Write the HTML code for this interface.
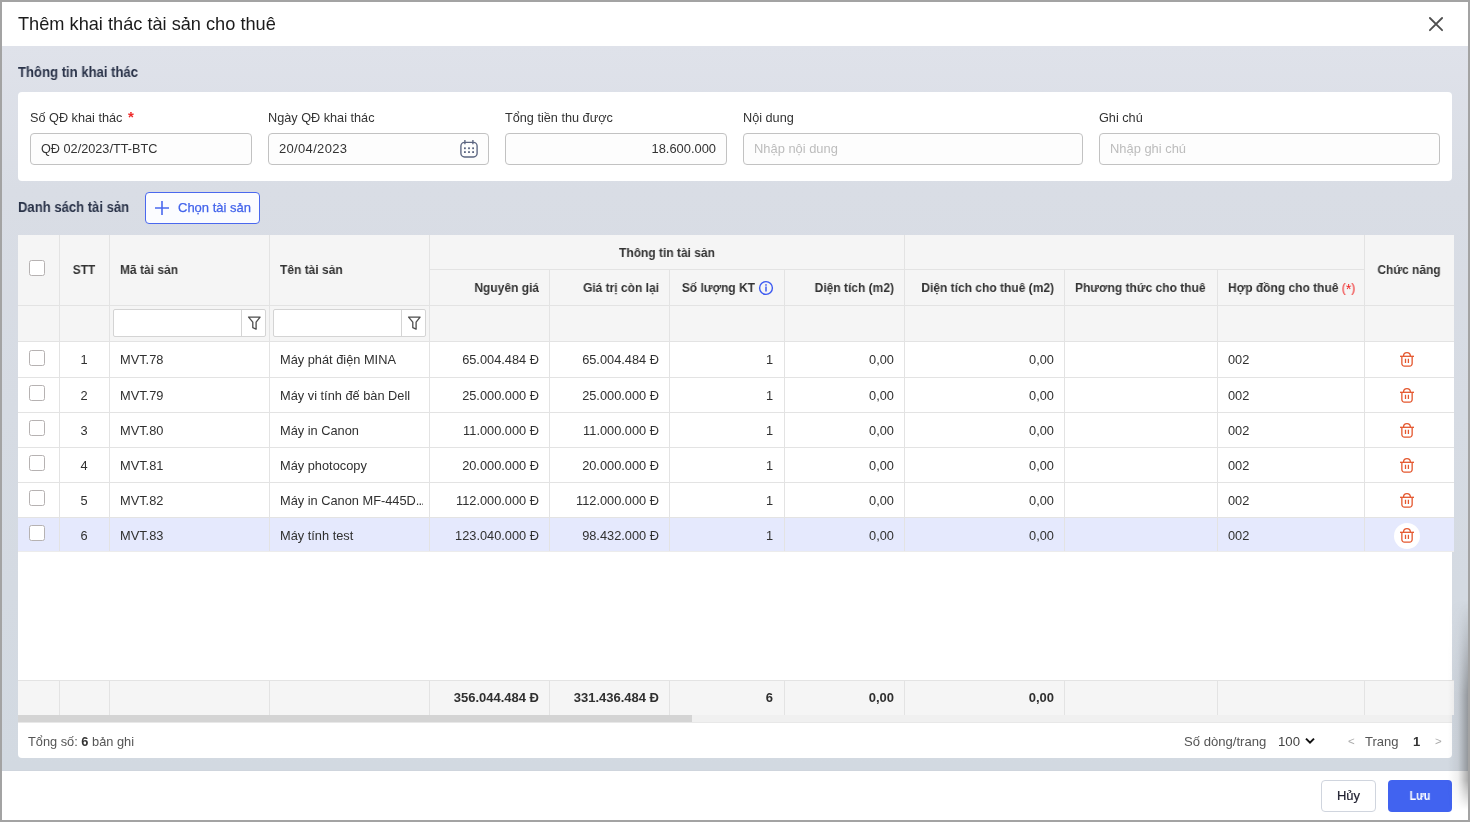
<!DOCTYPE html><html><head><meta charset="utf-8"><style>
html,body{margin:0;padding:0;}
body{width:1470px;height:822px;position:relative;overflow:hidden;background:#fff;font-family:"Liberation Sans", sans-serif;}
.t{position:absolute;white-space:nowrap;will-change:transform;}
.b{position:absolute;box-sizing:border-box;}
svg{position:absolute;}
</style></head><body>
<div class="b" style="left:2px;top:46px;width:1466px;height:725px;border-bottom:1px solid #cfd5dd;background:linear-gradient(180deg,#dfe2ea 0%,#d9dde5 20%,#d6dbe3 50%,#d2d9e1 100%);"></div>
<div class="t" style="left:18px;top:14.59px;font-size:18.2px;color:#1b1b1b;font-weight:400;line-height:18.2px;">Thêm khai thác tài sản cho thuê</div>
<svg style="left:1427px;top:15px" width="18" height="18" viewBox="0 0 18 18"><path d="M2.9 3.0L15.1 15.2M15.1 3.0L2.9 15.2" stroke="#4e4e4e" stroke-width="1.8" stroke-linecap="round"/></svg>
<div class="t" style="left:18px;top:65.15px;font-size:14px;color:#2a3349;font-weight:700;line-height:14px;transform:scaleX(0.935);transform-origin:0 0;">Thông tin khai thác</div>
<div class="b" style="left:18px;top:92px;width:1434px;height:89px;background:#fff;border-radius:4px;"></div>
<div class="t" style="left:30px;top:112.25px;font-size:12.7px;color:#333;font-weight:400;line-height:12.7px;">Số QĐ khai thác</div>
<div class="b" style="left:30px;top:133px;width:222px;height:32px;border:1px solid #c2c2c2;border-radius:4px;background:#fdfdfd;"></div>
<div class="t" style="left:268px;top:112.25px;font-size:12.7px;color:#333;font-weight:400;line-height:12.7px;">Ngày QĐ khai thác</div>
<div class="b" style="left:268px;top:133px;width:221px;height:32px;border:1px solid #c2c2c2;border-radius:4px;background:#fdfdfd;"></div>
<div class="t" style="left:505px;top:112.25px;font-size:12.7px;color:#333;font-weight:400;line-height:12.7px;">Tổng tiền thu được</div>
<div class="b" style="left:505px;top:133px;width:222px;height:32px;border:1px solid #c2c2c2;border-radius:4px;background:#fdfdfd;"></div>
<div class="t" style="left:743px;top:112.25px;font-size:12.7px;color:#333;font-weight:400;line-height:12.7px;">Nội dung</div>
<div class="b" style="left:743px;top:133px;width:340px;height:32px;border:1px solid #c2c2c2;border-radius:4px;background:#fdfdfd;"></div>
<div class="t" style="left:1099px;top:112.25px;font-size:12.7px;color:#333;font-weight:400;line-height:12.7px;">Ghi chú</div>
<div class="b" style="left:1099px;top:133px;width:341px;height:32px;border:1px solid #c2c2c2;border-radius:4px;background:#fdfdfd;"></div>
<div class="t" style="left:127.5px;top:109.30px;font-size:15px;color:#ee2a2a;font-weight:700;line-height:15px;">*</div>
<div class="t" style="left:41px;top:143.25px;font-size:12.7px;color:#333;font-weight:400;line-height:12.7px;">QĐ 02/2023/TT-BTC</div>
<div class="t" style="left:279px;top:142.00px;font-size:13px;color:#333;font-weight:400;line-height:13px;letter-spacing:0.33px;">20/04/2023</div>
<div class="t" style="left:416px;width:300px;text-align:right;top:143.08px;font-size:12.9px;color:#333;font-weight:400;line-height:12.9px;">18.600.000</div>
<div class="t" style="left:754px;top:143.08px;font-size:12.9px;color:#bcbcbc;font-weight:400;line-height:12.9px;">Nhập nội dung</div>
<div class="t" style="left:1110px;top:143.08px;font-size:12.9px;color:#bcbcbc;font-weight:400;line-height:12.9px;">Nhập ghi chú</div>
<svg style="left:459px;top:139px" width="20" height="20" viewBox="0 0 20 20">
<rect x="1.9" y="3.35" width="16.2" height="14.6" rx="3.6" fill="none" stroke="#5b6580" stroke-width="1.35"/>
<path d="M5.9 1.1V5.3M13.9 1.1V5.3" stroke="#5b6580" stroke-width="1.35"/>
<g fill="#5b6580"><rect x="5.0" y="8.36" width="1.8" height="1.8"/><rect x="9.1" y="8.36" width="1.8" height="1.8"/><rect x="13.2" y="8.36" width="1.8" height="1.8"/>
<rect x="5.0" y="12.2" width="1.8" height="1.8"/><rect x="9.1" y="12.2" width="1.8" height="1.8"/><rect x="13.2" y="12.2" width="1.8" height="1.8"/></g></svg>
<div class="t" style="left:18px;top:200.15px;font-size:14px;color:#2a3349;font-weight:700;line-height:14px;transform:scaleX(0.933);transform-origin:0 0;">Danh sách tài sản</div>
<div class="b" style="left:145px;top:192px;width:115px;height:32px;border:1px solid #4a68ee;border-radius:4px;background:#fbfcff;"></div>
<svg style="left:154px;top:200px" width="16" height="16" viewBox="0 0 16 16"><path d="M8 1V15M1 8H15" stroke="#4a68ee" stroke-width="1.6"/></svg>
<div class="t" style="left:178px;top:201.00px;font-size:13px;color:#4263eb;font-weight:400;line-height:13px;-webkit-text-stroke:0.25px #4263eb;">Chọn tài sản</div>
<div class="b" style="left:18px;top:235px;width:1436px;height:106px;background:#f5f5f5;"></div>
<div class="b" style="left:18px;top:342px;width:1436px;height:210px;background:#fff;"></div>
<div class="b" style="left:18px;top:552px;width:1434px;height:128px;background:#fff;"></div>
<div class="b" style="left:18px;top:518px;width:1436px;height:33px;background:#e5e9fd;"></div>
<div class="b" style="left:18px;top:680px;width:1436px;height:35px;background:#f5f5f5;border-top:1px solid #e3e3e3;"></div>
<div class="b" style="left:18px;top:715px;width:1434px;height:7px;background:#f0f0f0;"></div>
<div class="b" style="left:18px;top:715px;width:674px;height:7px;background:#d4d4d4;"></div>
<div class="b" style="left:18px;top:722px;width:1434px;height:36px;background:#fff;border-top:1px solid #e8e8e8;border-radius:0 0 4px 4px;"></div>
<div class="b" style="left:59px;top:235px;width:1px;height:106px;background:#e3e3e3;"></div>
<div class="b" style="left:109px;top:235px;width:1px;height:106px;background:#e3e3e3;"></div>
<div class="b" style="left:269px;top:235px;width:1px;height:106px;background:#e3e3e3;"></div>
<div class="b" style="left:429px;top:235px;width:1px;height:106px;background:#e3e3e3;"></div>
<div class="b" style="left:904px;top:235px;width:1px;height:106px;background:#e3e3e3;"></div>
<div class="b" style="left:1364px;top:235px;width:1px;height:106px;background:#e3e3e3;"></div>
<div class="b" style="left:549px;top:270px;width:1px;height:71px;background:#e3e3e3;"></div>
<div class="b" style="left:669px;top:270px;width:1px;height:71px;background:#e3e3e3;"></div>
<div class="b" style="left:784px;top:270px;width:1px;height:71px;background:#e3e3e3;"></div>
<div class="b" style="left:1064px;top:270px;width:1px;height:71px;background:#e3e3e3;"></div>
<div class="b" style="left:1217px;top:270px;width:1px;height:71px;background:#e3e3e3;"></div>
<div class="b" style="left:429px;top:269px;width:935px;height:1px;background:#e3e3e3;"></div>
<div class="b" style="left:18px;top:305px;width:1436px;height:1px;background:#e3e3e3;"></div>
<div class="b" style="left:18px;top:341px;width:1436px;height:1px;background:#e3e3e3;"></div>
<div class="b" style="left:18px;top:377px;width:1436px;height:1px;background:#e3e3e3;"></div>
<div class="b" style="left:18px;top:412px;width:1436px;height:1px;background:#e3e3e3;"></div>
<div class="b" style="left:18px;top:447px;width:1436px;height:1px;background:#e3e3e3;"></div>
<div class="b" style="left:18px;top:482px;width:1436px;height:1px;background:#e3e3e3;"></div>
<div class="b" style="left:18px;top:517px;width:1436px;height:1px;background:#e3e3e3;"></div>
<div class="b" style="left:18px;top:551px;width:1436px;height:1px;background:#ececec;"></div>
<div class="b" style="left:59px;top:342px;width:1px;height:209px;background:#e3e3e3;"></div>
<div class="b" style="left:109px;top:342px;width:1px;height:209px;background:#e3e3e3;"></div>
<div class="b" style="left:269px;top:342px;width:1px;height:209px;background:#e3e3e3;"></div>
<div class="b" style="left:429px;top:342px;width:1px;height:209px;background:#e3e3e3;"></div>
<div class="b" style="left:549px;top:342px;width:1px;height:209px;background:#e3e3e3;"></div>
<div class="b" style="left:669px;top:342px;width:1px;height:209px;background:#e3e3e3;"></div>
<div class="b" style="left:784px;top:342px;width:1px;height:209px;background:#e3e3e3;"></div>
<div class="b" style="left:904px;top:342px;width:1px;height:209px;background:#e3e3e3;"></div>
<div class="b" style="left:1064px;top:342px;width:1px;height:209px;background:#e3e3e3;"></div>
<div class="b" style="left:1217px;top:342px;width:1px;height:209px;background:#e3e3e3;"></div>
<div class="b" style="left:1364px;top:342px;width:1px;height:209px;background:#e3e3e3;"></div>
<div class="b" style="left:59px;top:681px;width:1px;height:34px;background:#e3e3e3;"></div>
<div class="b" style="left:109px;top:681px;width:1px;height:34px;background:#e3e3e3;"></div>
<div class="b" style="left:269px;top:681px;width:1px;height:34px;background:#e3e3e3;"></div>
<div class="b" style="left:429px;top:681px;width:1px;height:34px;background:#e3e3e3;"></div>
<div class="b" style="left:549px;top:681px;width:1px;height:34px;background:#e3e3e3;"></div>
<div class="b" style="left:669px;top:681px;width:1px;height:34px;background:#e3e3e3;"></div>
<div class="b" style="left:784px;top:681px;width:1px;height:34px;background:#e3e3e3;"></div>
<div class="b" style="left:904px;top:681px;width:1px;height:34px;background:#e3e3e3;"></div>
<div class="b" style="left:1064px;top:681px;width:1px;height:34px;background:#e3e3e3;"></div>
<div class="b" style="left:1217px;top:681px;width:1px;height:34px;background:#e3e3e3;"></div>
<div class="b" style="left:1364px;top:681px;width:1px;height:34px;background:#e3e3e3;"></div>
<div class="b" style="left:29px;top:260px;width:16px;height:16px;border:1px solid #b6b2b2;border-radius:2.5px;background:#fff;"></div>
<div class="t" style="left:59.0px;width:50px;text-align:center;top:263.00px;font-size:13px;color:#333;font-weight:700;line-height:13px;transform:scaleX(0.923);transform-origin:50% 0;">STT</div>
<div class="t" style="left:120px;top:263.00px;font-size:13px;color:#333;font-weight:700;line-height:13px;transform:scaleX(0.923);transform-origin:0 0;">Mã tài sản</div>
<div class="t" style="left:280px;top:263.00px;font-size:13px;color:#333;font-weight:700;line-height:13px;transform:scaleX(0.923);transform-origin:0 0;">Tên tài sản</div>
<div class="t" style="left:1364.0px;width:90px;text-align:center;top:263.00px;font-size:13px;color:#333;font-weight:700;line-height:13px;transform:scaleX(0.923);transform-origin:50% 0;">Chức năng</div>
<div class="t" style="left:517.0px;width:300px;text-align:center;top:246.00px;font-size:13px;color:#333;font-weight:700;line-height:13px;transform:scaleX(0.923);transform-origin:50% 0;">Thông tin tài sản</div>
<div class="t" style="left:239px;width:300px;text-align:right;top:281.00px;font-size:13px;color:#333;font-weight:700;line-height:13px;transform:scaleX(0.923);transform-origin:100% 0;">Nguyên giá</div>
<div class="t" style="left:359px;width:300px;text-align:right;top:281.00px;font-size:13px;color:#333;font-weight:700;line-height:13px;transform:scaleX(0.923);transform-origin:100% 0;">Giá trị còn lại</div>
<div class="t" style="left:455px;width:300px;text-align:right;top:281.00px;font-size:13px;color:#333;font-weight:700;line-height:13px;transform:scaleX(0.923);transform-origin:100% 0;">Số lượng KT</div>
<svg style="left:758px;top:280px" width="16" height="16" viewBox="0 0 16 16"><circle cx="8" cy="8" r="6.4" fill="none" stroke="#3d5af1" stroke-width="1.4"/><path d="M8 6.6V11.6" stroke="#3d5af1" stroke-width="1.5"/><circle cx="8" cy="4.9" r="0.85" fill="#3d5af1"/></svg>
<div class="t" style="left:594px;width:300px;text-align:right;top:281.00px;font-size:13px;color:#333;font-weight:700;line-height:13px;transform:scaleX(0.923);transform-origin:100% 0;">Diện tích (m2)</div>
<div class="t" style="left:754px;width:300px;text-align:right;top:281.00px;font-size:13px;color:#333;font-weight:700;line-height:13px;transform:scaleX(0.923);transform-origin:100% 0;">Diện tích cho thuê (m2)</div>
<div class="t" style="left:1075px;top:281.00px;font-size:13px;color:#333;font-weight:700;line-height:13px;transform:scaleX(0.923);transform-origin:0 0;">Phương thức cho thuê</div>
<div class="t" style="left:1228px;top:281.00px;font-size:13px;color:#333;font-weight:700;line-height:13px;transform:scaleX(0.923);transform-origin:0 0;">Hợp đồng cho thuê <span style="color:#f01a1a;font-weight:400">(<span style="font-size:15px;line-height:0;vertical-align:0;position:relative;top:1.5px">*</span>)</span></div>
<div class="b" style="left:113px;top:309px;width:153px;height:28px;border:1px solid #d4d4d4;border-radius:2px;background:#fff;"></div>
<div class="b" style="left:241px;top:310px;width:1px;height:26px;background:#d4d4d4;"></div>
<svg style="left:247px;top:315px" width="14" height="16" viewBox="0 0 14 16"><path d="M1.6 2.1H13.1L9.1 7.2V14.2L5.8 12.7V7.2Z" fill="none" stroke="#4d4d4d" stroke-width="1.3" stroke-linejoin="round"/></svg>
<div class="b" style="left:273px;top:309px;width:153px;height:28px;border:1px solid #d4d4d4;border-radius:2px;background:#fff;"></div>
<div class="b" style="left:401px;top:310px;width:1px;height:26px;background:#d4d4d4;"></div>
<svg style="left:407px;top:315px" width="14" height="16" viewBox="0 0 14 16"><path d="M1.6 2.1H13.1L9.1 7.2V14.2L5.8 12.7V7.2Z" fill="none" stroke="#4d4d4d" stroke-width="1.3" stroke-linejoin="round"/></svg>
<div class="b" style="left:29px;top:350px;width:16px;height:16px;border:1px solid #b6b2b2;border-radius:2.5px;background:#fff;"></div>
<div class="t" style="left:59.0px;width:50px;text-align:center;top:354.16px;font-size:12.8px;color:#303030;font-weight:400;line-height:12.8px;">1</div>
<div class="t" style="left:120px;top:354.16px;font-size:12.8px;color:#303030;font-weight:400;line-height:12.8px;">MVT.78</div>
<div class="t" style="left:280px;top:354.16px;font-size:12.8px;color:#303030;font-weight:400;line-height:12.8px;width:143px;overflow:hidden;">Máy phát điện MINA</div>
<div class="t" style="left:239px;width:300px;text-align:right;top:354.16px;font-size:12.8px;color:#303030;font-weight:400;line-height:12.8px;">65.004.484 Đ</div>
<div class="t" style="left:359px;width:300px;text-align:right;top:354.16px;font-size:12.8px;color:#303030;font-weight:400;line-height:12.8px;">65.004.484 Đ</div>
<div class="t" style="left:473px;width:300px;text-align:right;top:354.16px;font-size:12.8px;color:#303030;font-weight:400;line-height:12.8px;">1</div>
<div class="t" style="left:594px;width:300px;text-align:right;top:354.16px;font-size:12.8px;color:#303030;font-weight:400;line-height:12.8px;">0,00</div>
<div class="t" style="left:754px;width:300px;text-align:right;top:354.16px;font-size:12.8px;color:#303030;font-weight:400;line-height:12.8px;">0,00</div>
<div class="t" style="left:1228px;top:354.16px;font-size:12.8px;color:#303030;font-weight:400;line-height:12.8px;">002</div>
<svg style="left:1399px;top:351px" width="16" height="17" viewBox="0 0 16 17"><path d="M4.55 5.3V4.95A3.4 3.4 0 0 1 11.35 4.95V5.3" fill="none" stroke="#e4572e" stroke-width="1.3"/><path d="M1 5.3H15" stroke="#e4572e" stroke-width="1.3"/><path d="M2.85 5.3V12.6A2.5 2.5 0 0 0 5.35 15.1H10.65A2.5 2.5 0 0 0 13.15 12.6V5.3" fill="none" stroke="#e4572e" stroke-width="1.3"/><path d="M6.5 7.8V11.9M9.4 7.8V11.9" stroke="#e4572e" stroke-width="1.3"/></svg>
<div class="b" style="left:29px;top:385px;width:16px;height:16px;border:1px solid #b6b2b2;border-radius:2.5px;background:#fff;"></div>
<div class="t" style="left:59.0px;width:50px;text-align:center;top:390.16px;font-size:12.8px;color:#303030;font-weight:400;line-height:12.8px;">2</div>
<div class="t" style="left:120px;top:390.16px;font-size:12.8px;color:#303030;font-weight:400;line-height:12.8px;">MVT.79</div>
<div class="t" style="left:280px;top:390.16px;font-size:12.8px;color:#303030;font-weight:400;line-height:12.8px;width:143px;overflow:hidden;">Máy vi tính để bàn Dell</div>
<div class="t" style="left:239px;width:300px;text-align:right;top:390.16px;font-size:12.8px;color:#303030;font-weight:400;line-height:12.8px;">25.000.000 Đ</div>
<div class="t" style="left:359px;width:300px;text-align:right;top:390.16px;font-size:12.8px;color:#303030;font-weight:400;line-height:12.8px;">25.000.000 Đ</div>
<div class="t" style="left:473px;width:300px;text-align:right;top:390.16px;font-size:12.8px;color:#303030;font-weight:400;line-height:12.8px;">1</div>
<div class="t" style="left:594px;width:300px;text-align:right;top:390.16px;font-size:12.8px;color:#303030;font-weight:400;line-height:12.8px;">0,00</div>
<div class="t" style="left:754px;width:300px;text-align:right;top:390.16px;font-size:12.8px;color:#303030;font-weight:400;line-height:12.8px;">0,00</div>
<div class="t" style="left:1228px;top:390.16px;font-size:12.8px;color:#303030;font-weight:400;line-height:12.8px;">002</div>
<svg style="left:1399px;top:387px" width="16" height="17" viewBox="0 0 16 17"><path d="M4.55 5.3V4.95A3.4 3.4 0 0 1 11.35 4.95V5.3" fill="none" stroke="#e4572e" stroke-width="1.3"/><path d="M1 5.3H15" stroke="#e4572e" stroke-width="1.3"/><path d="M2.85 5.3V12.6A2.5 2.5 0 0 0 5.35 15.1H10.65A2.5 2.5 0 0 0 13.15 12.6V5.3" fill="none" stroke="#e4572e" stroke-width="1.3"/><path d="M6.5 7.8V11.9M9.4 7.8V11.9" stroke="#e4572e" stroke-width="1.3"/></svg>
<div class="b" style="left:29px;top:420px;width:16px;height:16px;border:1px solid #b6b2b2;border-radius:2.5px;background:#fff;"></div>
<div class="t" style="left:59.0px;width:50px;text-align:center;top:425.16px;font-size:12.8px;color:#303030;font-weight:400;line-height:12.8px;">3</div>
<div class="t" style="left:120px;top:425.16px;font-size:12.8px;color:#303030;font-weight:400;line-height:12.8px;">MVT.80</div>
<div class="t" style="left:280px;top:425.16px;font-size:12.8px;color:#303030;font-weight:400;line-height:12.8px;width:143px;overflow:hidden;">Máy in Canon</div>
<div class="t" style="left:239px;width:300px;text-align:right;top:425.16px;font-size:12.8px;color:#303030;font-weight:400;line-height:12.8px;">11.000.000 Đ</div>
<div class="t" style="left:359px;width:300px;text-align:right;top:425.16px;font-size:12.8px;color:#303030;font-weight:400;line-height:12.8px;">11.000.000 Đ</div>
<div class="t" style="left:473px;width:300px;text-align:right;top:425.16px;font-size:12.8px;color:#303030;font-weight:400;line-height:12.8px;">1</div>
<div class="t" style="left:594px;width:300px;text-align:right;top:425.16px;font-size:12.8px;color:#303030;font-weight:400;line-height:12.8px;">0,00</div>
<div class="t" style="left:754px;width:300px;text-align:right;top:425.16px;font-size:12.8px;color:#303030;font-weight:400;line-height:12.8px;">0,00</div>
<div class="t" style="left:1228px;top:425.16px;font-size:12.8px;color:#303030;font-weight:400;line-height:12.8px;">002</div>
<svg style="left:1399px;top:422px" width="16" height="17" viewBox="0 0 16 17"><path d="M4.55 5.3V4.95A3.4 3.4 0 0 1 11.35 4.95V5.3" fill="none" stroke="#e4572e" stroke-width="1.3"/><path d="M1 5.3H15" stroke="#e4572e" stroke-width="1.3"/><path d="M2.85 5.3V12.6A2.5 2.5 0 0 0 5.35 15.1H10.65A2.5 2.5 0 0 0 13.15 12.6V5.3" fill="none" stroke="#e4572e" stroke-width="1.3"/><path d="M6.5 7.8V11.9M9.4 7.8V11.9" stroke="#e4572e" stroke-width="1.3"/></svg>
<div class="b" style="left:29px;top:455px;width:16px;height:16px;border:1px solid #b6b2b2;border-radius:2.5px;background:#fff;"></div>
<div class="t" style="left:59.0px;width:50px;text-align:center;top:460.16px;font-size:12.8px;color:#303030;font-weight:400;line-height:12.8px;">4</div>
<div class="t" style="left:120px;top:460.16px;font-size:12.8px;color:#303030;font-weight:400;line-height:12.8px;">MVT.81</div>
<div class="t" style="left:280px;top:460.16px;font-size:12.8px;color:#303030;font-weight:400;line-height:12.8px;width:143px;overflow:hidden;">Máy photocopy</div>
<div class="t" style="left:239px;width:300px;text-align:right;top:460.16px;font-size:12.8px;color:#303030;font-weight:400;line-height:12.8px;">20.000.000 Đ</div>
<div class="t" style="left:359px;width:300px;text-align:right;top:460.16px;font-size:12.8px;color:#303030;font-weight:400;line-height:12.8px;">20.000.000 Đ</div>
<div class="t" style="left:473px;width:300px;text-align:right;top:460.16px;font-size:12.8px;color:#303030;font-weight:400;line-height:12.8px;">1</div>
<div class="t" style="left:594px;width:300px;text-align:right;top:460.16px;font-size:12.8px;color:#303030;font-weight:400;line-height:12.8px;">0,00</div>
<div class="t" style="left:754px;width:300px;text-align:right;top:460.16px;font-size:12.8px;color:#303030;font-weight:400;line-height:12.8px;">0,00</div>
<div class="t" style="left:1228px;top:460.16px;font-size:12.8px;color:#303030;font-weight:400;line-height:12.8px;">002</div>
<svg style="left:1399px;top:457px" width="16" height="17" viewBox="0 0 16 17"><path d="M4.55 5.3V4.95A3.4 3.4 0 0 1 11.35 4.95V5.3" fill="none" stroke="#e4572e" stroke-width="1.3"/><path d="M1 5.3H15" stroke="#e4572e" stroke-width="1.3"/><path d="M2.85 5.3V12.6A2.5 2.5 0 0 0 5.35 15.1H10.65A2.5 2.5 0 0 0 13.15 12.6V5.3" fill="none" stroke="#e4572e" stroke-width="1.3"/><path d="M6.5 7.8V11.9M9.4 7.8V11.9" stroke="#e4572e" stroke-width="1.3"/></svg>
<div class="b" style="left:29px;top:490px;width:16px;height:16px;border:1px solid #b6b2b2;border-radius:2.5px;background:#fff;"></div>
<div class="t" style="left:59.0px;width:50px;text-align:center;top:495.16px;font-size:12.8px;color:#303030;font-weight:400;line-height:12.8px;">5</div>
<div class="t" style="left:120px;top:495.16px;font-size:12.8px;color:#303030;font-weight:400;line-height:12.8px;">MVT.82</div>
<div class="t" style="left:280px;top:495.16px;font-size:12.8px;color:#303030;font-weight:400;line-height:12.8px;width:143px;overflow:hidden;">Máy in Canon MF-445D<span style="letter-spacing:-0.9px">...</span></div>
<div class="t" style="left:239px;width:300px;text-align:right;top:495.16px;font-size:12.8px;color:#303030;font-weight:400;line-height:12.8px;">112.000.000 Đ</div>
<div class="t" style="left:359px;width:300px;text-align:right;top:495.16px;font-size:12.8px;color:#303030;font-weight:400;line-height:12.8px;">112.000.000 Đ</div>
<div class="t" style="left:473px;width:300px;text-align:right;top:495.16px;font-size:12.8px;color:#303030;font-weight:400;line-height:12.8px;">1</div>
<div class="t" style="left:594px;width:300px;text-align:right;top:495.16px;font-size:12.8px;color:#303030;font-weight:400;line-height:12.8px;">0,00</div>
<div class="t" style="left:754px;width:300px;text-align:right;top:495.16px;font-size:12.8px;color:#303030;font-weight:400;line-height:12.8px;">0,00</div>
<div class="t" style="left:1228px;top:495.16px;font-size:12.8px;color:#303030;font-weight:400;line-height:12.8px;">002</div>
<svg style="left:1399px;top:492px" width="16" height="17" viewBox="0 0 16 17"><path d="M4.55 5.3V4.95A3.4 3.4 0 0 1 11.35 4.95V5.3" fill="none" stroke="#e4572e" stroke-width="1.3"/><path d="M1 5.3H15" stroke="#e4572e" stroke-width="1.3"/><path d="M2.85 5.3V12.6A2.5 2.5 0 0 0 5.35 15.1H10.65A2.5 2.5 0 0 0 13.15 12.6V5.3" fill="none" stroke="#e4572e" stroke-width="1.3"/><path d="M6.5 7.8V11.9M9.4 7.8V11.9" stroke="#e4572e" stroke-width="1.3"/></svg>
<div class="b" style="left:29px;top:525px;width:16px;height:16px;border:1px solid #b6b2b2;border-radius:2.5px;background:#fff;"></div>
<div class="t" style="left:59.0px;width:50px;text-align:center;top:530.16px;font-size:12.8px;color:#303030;font-weight:400;line-height:12.8px;">6</div>
<div class="t" style="left:120px;top:530.16px;font-size:12.8px;color:#303030;font-weight:400;line-height:12.8px;">MVT.83</div>
<div class="t" style="left:280px;top:530.16px;font-size:12.8px;color:#303030;font-weight:400;line-height:12.8px;width:143px;overflow:hidden;">Máy tính test</div>
<div class="t" style="left:239px;width:300px;text-align:right;top:530.16px;font-size:12.8px;color:#303030;font-weight:400;line-height:12.8px;">123.040.000 Đ</div>
<div class="t" style="left:359px;width:300px;text-align:right;top:530.16px;font-size:12.8px;color:#303030;font-weight:400;line-height:12.8px;">98.432.000 Đ</div>
<div class="t" style="left:473px;width:300px;text-align:right;top:530.16px;font-size:12.8px;color:#303030;font-weight:400;line-height:12.8px;">1</div>
<div class="t" style="left:594px;width:300px;text-align:right;top:530.16px;font-size:12.8px;color:#303030;font-weight:400;line-height:12.8px;">0,00</div>
<div class="t" style="left:754px;width:300px;text-align:right;top:530.16px;font-size:12.8px;color:#303030;font-weight:400;line-height:12.8px;">0,00</div>
<div class="t" style="left:1228px;top:530.16px;font-size:12.8px;color:#303030;font-weight:400;line-height:12.8px;">002</div>
<div class="b" style="left:1394px;top:523px;width:26px;height:26px;background:#fff;border-radius:50%;"></div>
<svg style="left:1399px;top:527px" width="16" height="17" viewBox="0 0 16 17"><path d="M4.55 5.3V4.95A3.4 3.4 0 0 1 11.35 4.95V5.3" fill="none" stroke="#e4572e" stroke-width="1.3"/><path d="M1 5.3H15" stroke="#e4572e" stroke-width="1.3"/><path d="M2.85 5.3V12.6A2.5 2.5 0 0 0 5.35 15.1H10.65A2.5 2.5 0 0 0 13.15 12.6V5.3" fill="none" stroke="#e4572e" stroke-width="1.3"/><path d="M6.5 7.8V11.9M9.4 7.8V11.9" stroke="#e4572e" stroke-width="1.3"/></svg>
<div class="t" style="left:239px;width:300px;text-align:right;top:691.00px;font-size:13px;color:#303030;font-weight:700;line-height:13px;">356.044.484 Đ</div>
<div class="t" style="left:359px;width:300px;text-align:right;top:691.00px;font-size:13px;color:#303030;font-weight:700;line-height:13px;">331.436.484 Đ</div>
<div class="t" style="left:473px;width:300px;text-align:right;top:691.00px;font-size:13px;color:#303030;font-weight:700;line-height:13px;">6</div>
<div class="t" style="left:594px;width:300px;text-align:right;top:691.00px;font-size:13px;color:#303030;font-weight:700;line-height:13px;">0,00</div>
<div class="t" style="left:754px;width:300px;text-align:right;top:691.00px;font-size:13px;color:#303030;font-weight:700;line-height:13px;">0,00</div>
<div class="t" style="left:28.3px;top:736.16px;font-size:12.8px;color:#555;font-weight:400;line-height:12.8px;">Tổng số: <b style="color:#333">6</b> bản ghi</div>
<div class="t" style="left:1184px;top:734.91px;font-size:13.1px;color:#555;font-weight:400;line-height:13.1px;">Số dòng/trang</div>
<div class="t" style="left:1278px;top:734.83px;font-size:13.2px;color:#444;font-weight:400;line-height:13.2px;">100</div>
<svg style="left:1304px;top:736px" width="12" height="10" viewBox="0 0 12 10"><path d="M2 2.6L6 6.6L10 2.6" fill="none" stroke="#111" stroke-width="2"/></svg>
<div class="t" style="left:1348px;top:736.27px;font-size:11.5px;color:#aaa;font-weight:400;line-height:11.5px;">&lt;</div>
<div class="t" style="left:1365px;top:735.00px;font-size:13px;color:#555;font-weight:400;line-height:13px;">Trang</div>
<div class="t" style="left:1413px;top:735.00px;font-size:13px;color:#333;font-weight:700;line-height:13px;">1</div>
<div class="t" style="left:1435px;top:736.27px;font-size:11.5px;color:#aaa;font-weight:400;line-height:11.5px;">&gt;</div>
<div class="b" style="left:1321px;top:780px;width:55px;height:32px;border:1px solid #d0d5de;border-radius:4px;background:#fff;"></div>
<div class="t" style="left:1321.0px;width:55px;text-align:center;top:789.00px;font-size:13px;color:#1e1e2e;font-weight:400;line-height:13px;-webkit-text-stroke:0.2px #1e1e2e;">Hủy</div>
<div class="b" style="left:1388px;top:780px;width:64px;height:32px;background:#4163f0;border-radius:4px;"></div>
<div class="t" style="left:1388.0px;width:64px;text-align:center;top:790.42px;font-size:12.5px;color:#fff;font-weight:700;line-height:12.5px;transform:scaleX(0.85);transform-origin:50% 0;">Lưu</div>
<div class="b" style="left:1448px;top:600px;width:20px;height:210px;background:linear-gradient(to right,rgba(60,60,60,0) 0%,rgba(60,60,60,0.08) 50%,rgba(60,60,60,0.42) 100%);-webkit-mask-image:linear-gradient(to bottom,transparent 0%,#000 45%,#000 86%,transparent 100%);"></div>
<div class="b" style="left:0px;top:0px;width:1470px;height:822px;border:2px solid #a3a3a3;background:transparent;"></div>
</body></html>
